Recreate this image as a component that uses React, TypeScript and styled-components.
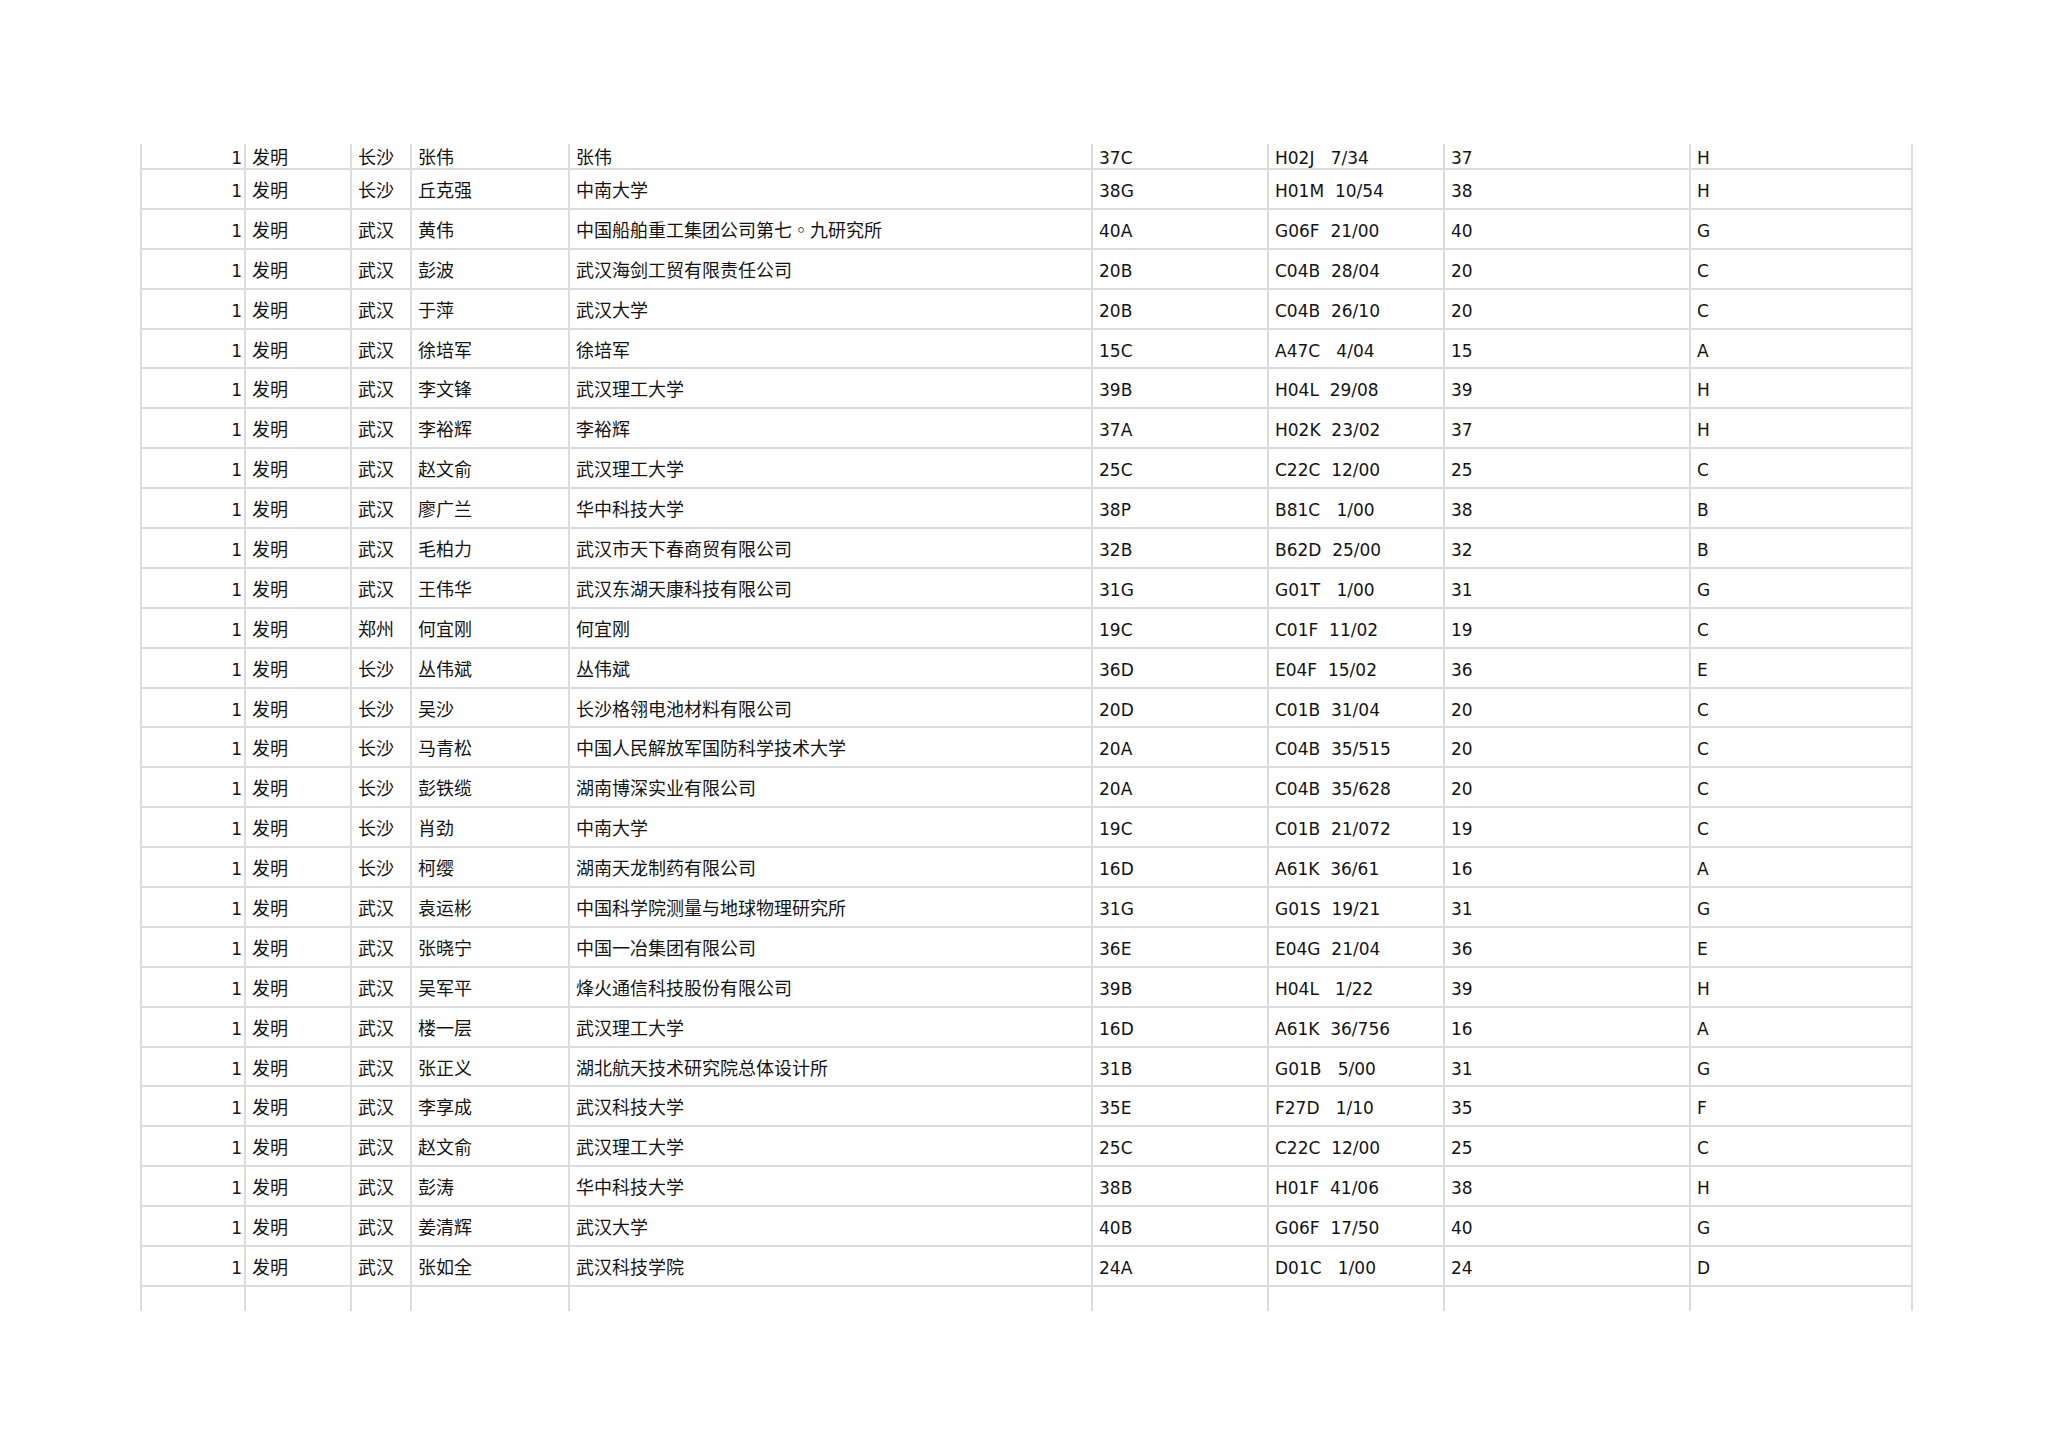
import styled, { createGlobalStyle } from 'styled-components';

const GlobalStyle = createGlobalStyle`
  html,
  body {
    margin: 0;
    padding: 0;
    background: #ffffff;
  }

  * {
    box-sizing: border-box;
  }
`;

type Align = 'left' | 'right';

const COLUMNS: { width: number; align: Align; latin: boolean }[] = [
  { width: 106, align: 'right', latin: true },
  { width: 106, align: 'left', latin: false },
  { width: 60, align: 'left', latin: false },
  { width: 158, align: 'left', latin: false },
  { width: 523, align: 'left', latin: false },
  { width: 176, align: 'left', latin: true },
  { width: 176, align: 'left', latin: true },
  { width: 246, align: 'left', latin: true },
  { width: 222, align: 'left', latin: true },
];

// 地区 / 发明人 / 申请人 / 分类号 / 大组 / 部
const ROWS: [string, string, string, string, string, string][] = [
  ['长沙', '张伟', '张伟', '37C', 'H02J   7/34', 'H'],
  ['长沙', '丘克强', '中南大学', '38G', 'H01M  10/54', 'H'],
  ['武汉', '黄伟', '中国船舶重工集团公司第七◦九研究所', '40A', 'G06F  21/00', 'G'],
  ['武汉', '彭波', '武汉海剑工贸有限责任公司', '20B', 'C04B  28/04', 'C'],
  ['武汉', '于萍', '武汉大学', '20B', 'C04B  26/10', 'C'],
  ['武汉', '徐培军', '徐培军', '15C', 'A47C   4/04', 'A'],
  ['武汉', '李文锋', '武汉理工大学', '39B', 'H04L  29/08', 'H'],
  ['武汉', '李裕辉', '李裕辉', '37A', 'H02K  23/02', 'H'],
  ['武汉', '赵文俞', '武汉理工大学', '25C', 'C22C  12/00', 'C'],
  ['武汉', '廖广兰', '华中科技大学', '38P', 'B81C   1/00', 'B'],
  ['武汉', '毛柏力', '武汉市天下春商贸有限公司', '32B', 'B62D  25/00', 'B'],
  ['武汉', '王伟华', '武汉东湖天康科技有限公司', '31G', 'G01T   1/00', 'G'],
  ['郑州', '何宜刚', '何宜刚', '19C', 'C01F  11/02', 'C'],
  ['长沙', '丛伟斌', '丛伟斌', '36D', 'E04F  15/02', 'E'],
  ['长沙', '吴沙', '长沙格翎电池材料有限公司', '20D', 'C01B  31/04', 'C'],
  ['长沙', '马青松', '中国人民解放军国防科学技术大学', '20A', 'C04B  35/515', 'C'],
  ['长沙', '彭铁缆', '湖南博深实业有限公司', '20A', 'C04B  35/628', 'C'],
  ['长沙', '肖劲', '中南大学', '19C', 'C01B  21/072', 'C'],
  ['长沙', '柯缨', '湖南天龙制药有限公司', '16D', 'A61K  36/61', 'A'],
  ['武汉', '袁运彬', '中国科学院测量与地球物理研究所', '31G', 'G01S  19/21', 'G'],
  ['武汉', '张晓宁', '中国一冶集团有限公司', '36E', 'E04G  21/04', 'E'],
  ['武汉', '吴军平', '烽火通信科技股份有限公司', '39B', 'H04L   1/22', 'H'],
  ['武汉', '楼一层', '武汉理工大学', '16D', 'A61K  36/756', 'A'],
  ['武汉', '张正义', '湖北航天技术研究院总体设计所', '31B', 'G01B   5/00', 'G'],
  ['武汉', '李享成', '武汉科技大学', '35E', 'F27D   1/10', 'F'],
  ['武汉', '赵文俞', '武汉理工大学', '25C', 'C22C  12/00', 'C'],
  ['武汉', '彭涛', '华中科技大学', '38B', 'H01F  41/06', 'H'],
  ['武汉', '姜清辉', '武汉大学', '40B', 'G06F  17/50', 'G'],
  ['武汉', '张如全', '武汉科技学院', '24A', 'D01C   1/00', 'D'],
];

const Page = styled.main`
  padding: 144px 0 0 140px;
  min-height: 1447px;
  background: #ffffff;
`;

const Sheet = styled.section`
  display: grid;
  width: ${COLUMNS.reduce((sum, c) => sum + c.width, 0)}px;
`;

const Row = styled.div<{ $height: number }>`
  display: grid;
  grid-template-columns: ${COLUMNS.map((c) => `${c.width}px`).join(' ')};
  height: ${(p) => p.$height}px;
`;

const Cell = styled.div<{ $align: Align; $latin: boolean; $first: boolean; $open: boolean }>`
  display: flex;
  align-items: center;
  justify-content: ${(p) => (p.$align === 'right' ? 'flex-end' : 'flex-start')};
  padding-left: ${(p) => (p.$align === 'right' ? 0 : 6)}px;
  padding-right: ${(p) => (p.$align === 'right' ? 2 : 0)}px;
  padding-top: ${(p) => (p.$latin ? 5 : 0)}px;
  border-right: 2px solid #dcdcdc;
  border-left: ${(p) => (p.$first ? '2px solid #dcdcdc' : 'none')};
  border-bottom: ${(p) => (p.$open ? 'none' : '2px solid #dcdcdc')};
  overflow: hidden;
  white-space: pre;
  color: #141414;
  font-family: ${(p) =>
    p.$latin
      ? '"DejaVu Sans", Verdana, sans-serif'
      : '"Noto Sans CJK SC", "Noto Sans", sans-serif'};
  font-size: ${(p) => (p.$latin ? 17 : 18)}px;
  line-height: 1;
`;

function SheetRow({ values, height, open }: { values: string[]; height: number; open?: boolean }) {
  return (
    <Row $height={height}>
      {COLUMNS.map((col, i) => (
        <Cell key={i} $align={col.align} $latin={col.latin} $first={i === 0} $open={!!open}>
          {values[i] ?? ''}
        </Cell>
      ))}
    </Row>
  );
}

export default function App() {
  return (
    <>
      <GlobalStyle />
      <Page>
        <Sheet>
          {ROWS.map((r, i) => {
            const [city, inventor, applicant, cls, ipc, section] = r;
            const group = cls.slice(0, 2);
            return (
              <SheetRow
                key={i}
                height={i === 0 ? 26 : 39.9}
                values={['1', '发明', city, inventor, applicant, cls, ipc, group, section]}
              />
            );
          })}
          <SheetRow height={24} values={[]} open />
        </Sheet>
      </Page>
    </>
  );
}
